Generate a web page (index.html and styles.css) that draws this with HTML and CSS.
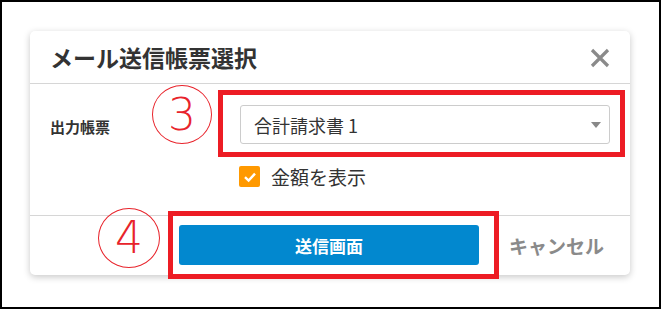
FILE: index.html
```html
<!DOCTYPE html>
<html lang="ja">

<head>
    <meta charset="UTF-8">
    <meta name="viewport" content="width=device-width,initial-scale=1.0">
    <title>メール送信帳票選択</title>
    <link rel="stylesheet" href="styles.css">
</head>

<body>
    <div class="frame">
        <section class="dialog">
            <!-- Header -->
            <div class="dialog-head">
                <h1 class="dialog-title">メール送信帳票選択</h1>
                <span class="close">
                    <svg width="20" height="20" viewBox="0 0 20 20">
                        <path d="M2 2 L18 18 M18 2 L2 18" stroke="#8a8a8a" stroke-width="3.2" fill="none" />
                    </svg>
                </span>
            </div>
            <!-- Body -->
            <div class="dialog-body">
                <div class="row">
                    <label class="label">出力帳票</label>
                    <div class="select">
                        <span>合計請求書 1</span>
                        <span class="caret"></span>
                    </div>
                </div>
                <div class="check-row">
                    <span class="checkbox">
                        <svg width="14" height="14" viewBox="0 0 14 14">
                            <path d="M2 7.2 L5.6 10.6 L12 3.6" stroke="#fff" stroke-width="2.4" fill="none" />
                        </svg>
                    </span>
                    <span class="check-text">金額を表示</span>
                </div>
            </div>
            <!-- Footer -->
            <div class="dialog-foot">
                <button class="btn-send">送信画面</button>
                <span class="cancel">キャンセル</span>
            </div>
            <!-- Annotations -->
            <div class="mark mark-select"></div>
            <div class="mark mark-send"></div>
            <div class="num num-3">3</div>
            <div class="num num-4">4</div>
        </section>
    </div>
</body>

</html>
```

FILE: styles.css
```css
* {
    padding: 0;
    margin: 0;
    box-sizing: border-box;
    font-family: "Noto Sans CJK JP", "Noto Sans", sans-serif;
}

body {
    background: #fff;
}

/* outer frame of the screenshot */
.frame {
    width: 661px;
    height: 309px;
    border: 2px solid #000;
    padding: 29px 0 0 28px;
}

.dialog {
    position: relative;
    width: 600px;
    height: 244px;
    background: #fff;
    border-radius: 5px;
    box-shadow: 0 2px 7px rgba(0, 0, 0, 0.22);
}

/* Header */
.dialog-head {
    display: flex;
    align-items: center;
    justify-content: space-between;
    height: 53px;
    padding: 0 20px 0 20px;
    border-bottom: 1px solid #d6d6d6;
}

.dialog-title {
    font-size: 23px;
    font-weight: bold;
    color: #333;
}

.close {
    display: flex;
    margin-top: 2px;
}

/* Body */
.dialog-body {
    height: 132px;
    padding: 21px 20px 0 20px;
    border-bottom: 1px solid #d6d6d6;
}

.row {
    display: flex;
    align-items: center;
}

.label {
    width: 190px;
    font-size: 15px;
    font-weight: bold;
    color: #333;
    padding-top: 4px;
}

.select {
    display: flex;
    align-items: center;
    justify-content: space-between;
    width: 370px;
    height: 39px;
    padding: 0 8px 0 13px;
    border: 1px solid #ccc;
    border-radius: 3px;
    font-size: 18px;
    color: #333;
}

.caret {
    width: 0;
    height: 0;
    border-left: 5px solid transparent;
    border-right: 5px solid transparent;
    border-top: 6px solid #888;
    margin-top: 1px;
}

.check-row {
    display: flex;
    align-items: center;
    gap: 11px;
    margin: 19px 0 0 189px;
}

.checkbox {
    display: grid;
    place-items: center;
    width: 21px;
    height: 21px;
    background: #ff9900;
    border-radius: 2px;
}

.check-text {
    font-size: 19px;
    color: #333;
}

/* Footer */
.dialog-foot {
    display: flex;
    align-items: center;
    justify-content: flex-end;
    gap: 30px;
    height: 58px;
    padding: 0 26px 0 0;
}

.btn-send {
    width: 300px;
    height: 40px;
    border: none;
    border-radius: 3px;
    background: #0288cf;
    color: #fff;
    font-size: 17px;
    font-weight: bold;
}

.cancel {
    font-size: 19px;
    font-weight: bold;
    color: #8a8a8a;
}

/* red annotation boxes and circled numbers */
.mark {
    position: absolute;
    border: 5px solid #ed1c24;
}

.mark-select {
    left: 188px;
    top: 59px;
    width: 407px;
    height: 67px;
}

.mark-send {
    left: 138px;
    top: 180px;
    width: 331px;
    height: 68px;
}

.num {
    position: absolute;
    display: grid;
    place-items: center;
    border: 1.5px solid #e8232b;
    border-radius: 50%;
    color: #e8232b;
    font-family: "DejaVu Sans", sans-serif;
    font-size: 44px;
    font-weight: 200;
    line-height: 1;
}

.num-3 {
    left: 122px;
    top: 54px;
    width: 60px;
    height: 59px;
}

.num-4 {
    left: 68px;
    top: 177px;
    width: 62px;
    height: 60px;
}
```
